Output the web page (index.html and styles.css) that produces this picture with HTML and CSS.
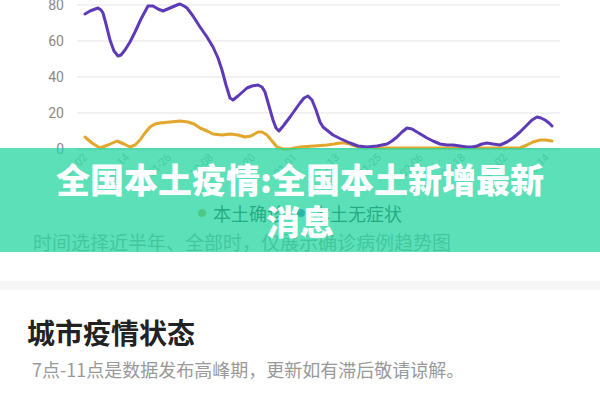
FILE: index.html
```html
<!DOCTYPE html>
<html lang="zh-CN">
<head>
    <meta charset="UTF-8">
    <meta name="viewport" content="width=device-width, initial-scale=1.0">
    <title>全国本土疫情</title>
    <link rel="stylesheet" href="styles.css">
</head>
<body>
    <div class="trend">
        <svg class="chart" width="600" height="196" viewBox="0 0 600 196">
            <g class="grid">
                <line x1="77" y1="5" x2="560" y2="5"/>
                <line x1="77" y1="41" x2="560" y2="41"/>
                <line x1="77" y1="77" x2="560" y2="77"/>
                <line x1="77" y1="113" x2="560" y2="113"/>
            </g>
            <line class="axis" x1="77" y1="149" x2="560" y2="149"/>
            <g class="y-labels">
                <text x="64" y="6">80</text>
                <text x="64" y="42">60</text>
                <text x="64" y="78">40</text>
                <text x="64" y="114">20</text>
                <text x="64" y="150">0</text>
            </g>
            <g class="x-labels">
                <text transform="translate(88 158) rotate(-45)">11-02</text>
                <text transform="translate(130 158) rotate(-45)">11-14</text>
                <text transform="translate(172 158) rotate(-45)">11-26</text>
                <text transform="translate(214 158) rotate(-45)">12-08</text>
                <text transform="translate(256 158) rotate(-45)">12-20</text>
                <text transform="translate(298 158) rotate(-45)">01-01</text>
                <text transform="translate(340 158) rotate(-45)">01-13</text>
                <text transform="translate(382 158) rotate(-45)">01-25</text>
                <text transform="translate(424 158) rotate(-45)">02-06</text>
                <text transform="translate(466 158) rotate(-45)">02-18</text>
                <text transform="translate(508 158) rotate(-45)">03-02</text>
                <text transform="translate(550 158) rotate(-45)">03-14</text>
            </g>
            <!-- 本土无症状 -->
            <polyline class="line-orange" points="85,137 92,143 100,148 108,145 117,141 124,144 130,147 135,145 140,140 145,133 150,127 155,124 160,123 170,122 180,121 188,122 194,124 200,128 207,131 213,134 222,135 230,134 238,135 245,137 251,136 258,132 262,132 267,135 272,141 277,147 283,149 290,149 300,147 314,146 327,145 334,144 340,143 345,143 350,144 355,146 360,147 380,148 420,148 480,148 520,148 527,145 533,142 540,140 546,140 552,141"/>
            <!-- 本土确诊 -->
            <polyline class="line-purple" points="85,14 90,11 98,8 101,10 103,13 106,24 110,40 114,51 118,56 121,55 125,50 130,42 135,32 141,19 148,6 153,6 158,9 163,11 170,8 177,5 180,4 184,6 187,8 193,16 200,27 207,37 213,47 218,58 222,70 226,85 230,98 233,100 238,96 247,88 252,86 258,85 262,87 265,92 269,106 273,120 276,128 279,131 284,125 290,117 295,110 300,103 304,98 308,96 312,100 316,110 320,122 323,127 328,131 333,135 341,139 350,143 358,146 367,147 377,146 387,144 392,141 397,137 402,132 407,128 412,129 417,132 422,135 427,138 433,141 440,144 447,145 453,145 460,146 467,147 472,147 477,146 482,144 487,143 493,144 500,145 507,142 513,138 520,132 527,125 532,120 537,117 541,118 545,120 549,123 552,126"/>
        </svg>

        <div class="legend">
            <span class="legend-item"><i class="dot dot-confirmed"></i>本土确诊</span>
            <span class="legend-item"><i class="dot dot-silent"></i>本土无症状</span>
        </div>
        <p class="caption">时间选择近半年、全部时，仅展示确诊病例趋势图</p>

        <div class="banner">
            <h1>全国本土疫情:全国本土新增最新消息</h1>
        </div>
    </div>

    <div class="divider"></div>

    <div class="section">
        <h2>城市疫情状态</h2>
        <p class="note">7点-11点是数据发布高峰期，更新如有滞后敬请谅解。</p>
    </div>
</body>
</html>
```

FILE: styles.css
```css
body {
    margin: 0;
    background: #fff;
    font-family: "Noto Sans CJK SC", "Noto Sans", sans-serif;
    color: #333;
}
.trend {
    position: relative;
    height: 281px;
}
.chart {
    display: block;
}
.grid line {
    stroke: #ececec;
    stroke-width: 1.5;
}
.axis {
    stroke: #d0d0d0;
    stroke-width: 1.5;
}
.y-labels text {
    font-family: "Roboto", "Liberation Sans", sans-serif;
    font-size: 14px;
    fill: #8a8a8a;
    text-anchor: end;
    dominant-baseline: middle;
}
.x-labels text {
    font-family: "Roboto", "Liberation Sans", sans-serif;
    font-size: 11px;
    fill: #aaa;
    text-anchor: end;
}
.line-purple,
.line-orange {
    fill: none;
    stroke-width: 3;
    stroke-linejoin: round;
    stroke-linecap: round;
}
.line-purple {
    stroke: #5e3bb6;
}
.line-orange {
    stroke: #e2a62c;
}
.legend {
    display: flex;
    justify-content: center;
    gap: 12px;
    height: 24px;
    margin-top: 5px;
    font-size: 18px;
    line-height: 24px;
    color: #2a2a2a;
}
.legend-item {
    display: flex;
    align-items: center;
}
.dot {
    width: 8px;
    height: 8px;
    border-radius: 50%;
    margin-right: 7px;
}
.dot-confirmed {
    background: #c8a43a;
}
.dot-silent {
    background: #3a5cc0;
}
.caption {
    margin: 4px 0 0;
    padding-left: 33px;
    font-size: 19px;
    line-height: 26px;
    color: #999;
}
/* 标题横幅，半透明盖在图表下半部分上 */
.banner {
    position: absolute;
    top: 148px;
    left: 0;
    right: 0;
    height: 104px;
    display: flex;
    align-items: center;
    justify-content: center;
    background: rgba(38, 214, 160, 0.75);
}
.banner h1 {
    margin: 0;
    padding: 0 48px;
    font-size: 34px;
    font-weight: 900;
    line-height: 42px;
    color: #fff;
    text-align: center;
}
.divider {
    height: 9px;
    background: #f6f6f6;
}
.section {
    padding: 24px 27px 0;
}
.section h2 {
    margin: 0;
    font-size: 28px;
    font-weight: 700;
    line-height: 36px;
    color: #222;
}
.note {
    margin: 7px 0 0 5px;
    font-size: 18px;
    line-height: 24px;
    color: #999;
}
```
